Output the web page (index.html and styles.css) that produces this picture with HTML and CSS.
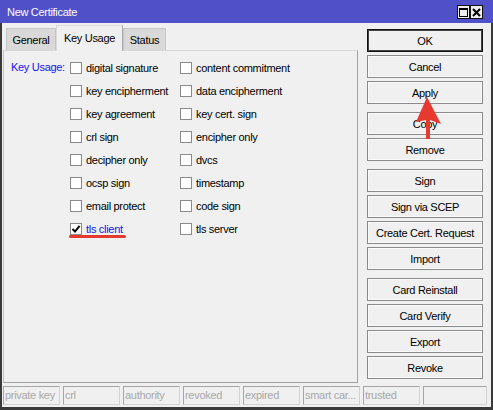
FILE: index.html
```html
<!DOCTYPE html>
<html>
<head>
<meta charset="utf-8">
<title>New Certificate</title>
<link rel="stylesheet" href="styles.css">
</head>
<body>
<div class="window">
  <div class="titlebar">
    <span class="title">New Certificate</span>
    <div class="tb-buttons">
      <span class="tb-btn"><svg width="11" height="12" viewBox="0 0 11 12"><rect x="1.5" y="2.5" width="8" height="8" fill="none" stroke="#000" stroke-width="1"/><rect x="1" y="2" width="9" height="2" fill="#000"/></svg></span>
      <span class="tb-btn"><svg width="11" height="12" viewBox="0 0 11 12"><path d="M2 3 L9 10 M9 3 L2 10" stroke="#000" stroke-width="2"/></svg></span>
    </div>
  </div>
  <div class="client">
    <div class="main">
      <div class="tabs-area">
        <div class="tabs">
          <div class="tab tab-general">General</div>
          <div class="tab tab-key active">Key Usage</div>
          <div class="tab tab-status">Status</div>
        </div>
        <div class="panel">
          <div class="grid">
            <div class="label">Key Usage:</div>
            <div class="cb"><span class="box"></span>digital signature</div>
            <div class="cb"><span class="box"></span>content commitment</div>
            <div class="cb"><span class="box"></span>key encipherment</div>
            <div class="cb"><span class="box"></span>data encipherment</div>
            <div class="cb"><span class="box"></span>key agreement</div>
            <div class="cb"><span class="box"></span>key cert. sign</div>
            <div class="cb"><span class="box"></span>crl sign</div>
            <div class="cb"><span class="box"></span>encipher only</div>
            <div class="cb"><span class="box"></span>decipher only</div>
            <div class="cb"><span class="box"></span>dvcs</div>
            <div class="cb"><span class="box"></span>ocsp sign</div>
            <div class="cb"><span class="box"></span>timestamp</div>
            <div class="cb"><span class="box"></span>email protect</div>
            <div class="cb"><span class="box"></span>code sign</div>
            <div class="cb checked"><span class="box"><svg width="10" height="10" viewBox="0 0 10 10"><path d="M1.5 5 L4 7.6 L8.6 1.8" fill="none" stroke="#000" stroke-width="2"/></svg></span>tls client</div>
            <div class="cb"><span class="box"></span>tls server</div>
          </div>
        </div>
      </div>
      <div class="buttons">
        <div class="group">
          <div class="btn default">OK</div>
          <div class="btn">Cancel</div>
          <div class="btn">Apply</div>
        </div>
        <div class="group">
          <div class="btn">Copy</div>
          <div class="btn">Remove</div>
        </div>
        <div class="group">
          <div class="btn">Sign</div>
          <div class="btn">Sign via SCEP</div>
          <div class="btn">Create Cert. Request</div>
          <div class="btn">Import</div>
        </div>
        <div class="group">
          <div class="btn">Card Reinstall</div>
          <div class="btn">Card Verify</div>
          <div class="btn">Export</div>
          <div class="btn">Revoke</div>
        </div>
      </div>
    </div>
    <div class="statusbar">
      <div class="sb">private key</div>
      <div class="sb">crl</div>
      <div class="sb">authority</div>
      <div class="sb">revoked</div>
      <div class="sb">expired</div>
      <div class="sb">smart car...</div>
      <div class="sb">trusted</div>
      <div class="sb last"></div>
    </div>
  </div>
  <svg class="arrow" width="34" height="48" viewBox="0 0 34 48"><polygon points="17,3 31,30 20,26 20,45 16,45 16,26 6,28" fill="#e63a30"/></svg>
</div>
</body>
</html>
```
FILE: styles.css
```css
* { box-sizing: border-box; }
html, body { margin: 0; padding: 0; }
body {
  width: 493px;
  height: 410px;
  overflow: hidden;
  background: #f0f0f0;
  font-family: "Liberation Sans", Arial, sans-serif;
  font-size: 11px;
  letter-spacing: -0.3px;
  color: #000;
}
.window {
  position: relative;
  width: 493px;
  height: 410px;
  display: flex;
  flex-direction: column;
}
.titlebar {
  height: 23px;
  flex: none;
  background: #5050c8;
  color: #fff;
  display: flex;
  align-items: center;
  justify-content: space-between;
  padding: 0 10px 0 7px;
}
.title { font-size: 11px; }
.tb-buttons { display: flex; gap: 0; margin-top: 1px; }
.tb-btn {
  width: 13px;
  height: 14px;
  border: 1px solid #111;
  background: #eeeeee;
  display: flex;
  align-items: center;
  justify-content: center;
}
.client {
  flex: 1;
  display: flex;
  flex-direction: column;
  background: #f0f0f0;
  border: solid #3a3a3a;
  border-width: 0 2px 3px 2px;
}
.main { flex: 1; display: flex; }
.tabs-area {
  margin: 2px 0 0 1px;
  width: 355px;
  display: flex;
  flex-direction: column;
}
.tabs {
  height: 25px;
  display: flex;
  align-items: flex-start;
  padding-left: 3px;
  position: relative;
  z-index: 1;
}
.tab {
  margin-top: 3px;
  height: 22px;
  background: #d9d9d9;
  border: 1px solid #c6c6c6;
  border-bottom: 0;
  display: flex;
  align-items: center;
  justify-content: center;
}
.tab.active {
  margin-top: 0;
  height: 26px;
  background: #f0f0f0;
  border-color: #dadada #a9a9a9 #f0f0f0 #dadada;
  padding-bottom: 1px;
}
.tab-general { width: 50px; }
.tab-key { width: 67px; }
.tab-status { width: 43px; }
.panel {
  height: 333px;
  border: 1px solid;
  border-color: #d9d9d9 #a0a0a0 #a0a0a0 #c4c4c4;
  padding: 5px 0 0 7px;
}
.grid {
  display: grid;
  grid-template-columns: 59px 110px 1fr;
  grid-auto-rows: 23px;
}
.label {
  grid-column: 1;
  grid-row: 1 / span 8;
  color: #1414f0;
  line-height: 23px;
  align-self: start;
}
.cb {
  position: relative;
  display: flex;
  align-items: center;
  gap: 4px;
  white-space: nowrap;
}
.box {
  width: 12px;
  height: 12px;
  flex: none;
  background: #fff;
  border: 1px solid #8a8a8a;
  display: flex;
  align-items: center;
  justify-content: center;
}
.cb.checked { color: #1414f0; }
.cb.checked::after {
  content: "";
  position: absolute;
  left: -1px;
  top: 18px;
  width: 57px;
  height: 3px;
  border-radius: 2px;
  background: #e63a30;
}
.buttons {
  margin: 6px 0 0 9px;
  width: 116px;
  display: flex;
  flex-direction: column;
  gap: 8px;
}
.group { display: flex; flex-direction: column; gap: 3px; }
.btn {
  height: 23px;
  border: 1px solid #8a8a8a;
  box-shadow: inset 0 0 0 1px #fafafa;
  background: #f0f0f0;
  display: flex;
  align-items: center;
  justify-content: center;
  white-space: nowrap;
}
.btn.default {
  border-color: #111;
  box-shadow: inset 0 0 0 1px #444;
}
.statusbar {
  margin: 3px 0 2px 1px;
  height: 19px;
  display: flex;
  gap: 3px;
}
.sb {
  width: 57px;
  height: 19px;
  border: 1px solid;
  border-color: #a5a5a5 #d2d2d2 #d2d2d2 #a5a5a5;
  color: #a8a8a8;
  padding-left: 1px;
  line-height: 17px;
  white-space: nowrap;
  overflow: hidden;
}
.sb.last { width: 64px; }
.arrow {
  position: absolute;
  left: 410px;
  top: 94px;
}
```
